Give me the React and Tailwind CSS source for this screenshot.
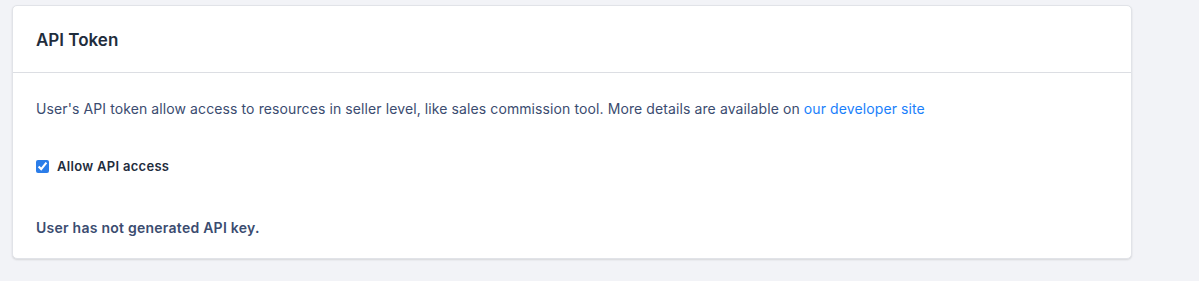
export default function App() {
  return (
    <div
      className="min-h-[281px] bg-[#f2f3f7] pl-[12px] pr-[67px] pt-[5px] pb-[23px]"
      style={{ fontFamily: "Inter, 'Noto Sans', sans-serif" }}
    >
      <div className="rounded-[5px] border border-[#e1e3e8] bg-white shadow-[0_1px_2px_rgba(0,0,0,0.12)]">
        <div className="h-[67px] border-b border-[#dcdee3] px-[23px] pt-[3px] flex items-center">
          <h2 className="text-[17px] font-semibold text-[#1f2d3d]">API Token</h2>
        </div>
        <div className="px-[23px] pt-[26px] pb-[20px]">
          <p className="text-[14px] leading-[20px] tracking-[0.1px] text-[#3b4c70]">
            User's API token allow access to resources in seller level, like sales commission tool. More details are available on{" "}
            <a href="#" className="text-[#1a7ffb]">our developer site</a>
          </p>
          <label className="mt-[38px] flex items-center gap-[8px]">
            <input type="checkbox" defaultChecked className="h-[13px] w-[13px] accent-[#2b7de9]" />
            <span className="text-[13px] font-semibold tracking-[0.3px] text-[#1f2d3d]">Allow API access</span>
          </label>
          <p className="mt-[40px] text-[14px] font-semibold tracking-[0.25px] text-[#3b4c70]">User has not generated API key.</p>
        </div>
      </div>
    </div>
  );
}
